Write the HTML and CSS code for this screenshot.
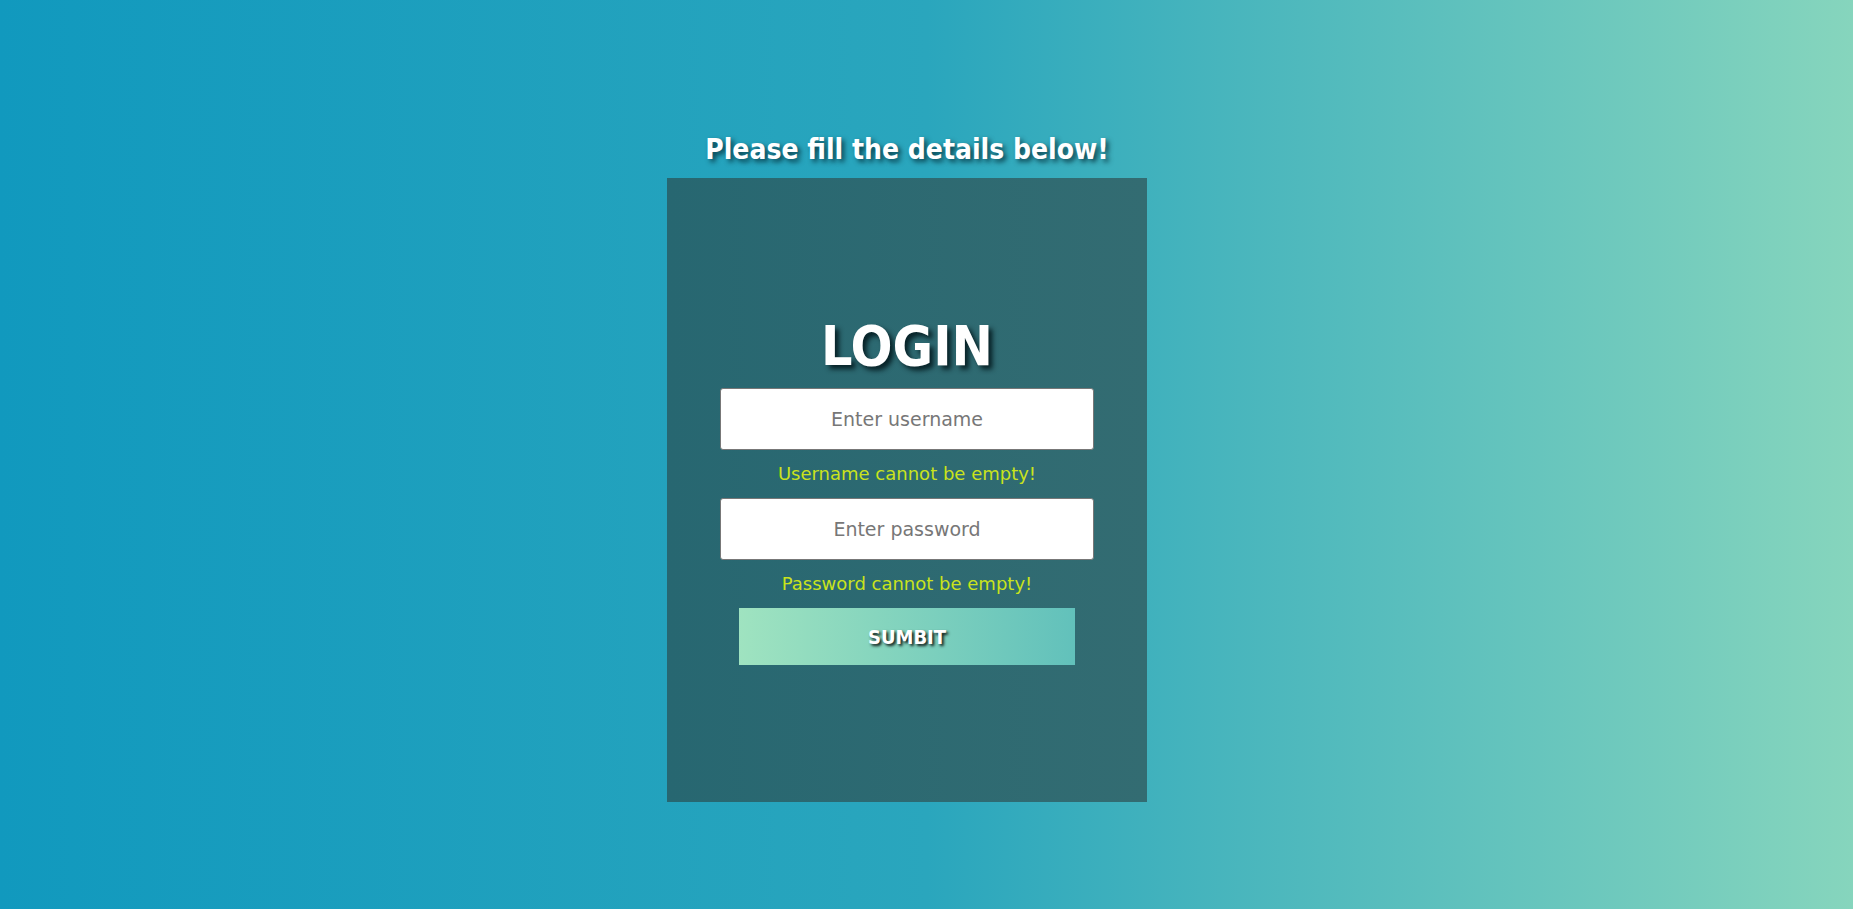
FILE: index.html
```html
<!DOCTYPE html>
<html lang="en">
<head>
<meta charset="utf-8">
<title>Login</title>
<link rel="stylesheet" href="styles.css">
</head>
<body>
<div class="page">
  <div class="wrap">
    <h2 class="title">Please fill the details below!</h2>
    <form class="card">
      <h1 class="login">LOGIN</h1>
      <input class="field" type="text" placeholder="Enter username">
      <p class="err">Username cannot be empty!</p>
      <input class="field" type="password" placeholder="Enter password">
      <p class="err">Password cannot be empty!</p>
      <button class="btn" type="button">SUMBIT</button>
    </form>
  </div>
</div>
</body>
</html>
```
FILE: styles.css
```css
html, body {
  margin: 0;
  padding: 0;
  height: 100%;
}
body {
  font-family: "DejaVu Sans", sans-serif;
  background: linear-gradient(to right, #1199be 0%, #2aa6bd 50%, #86d5bd 100%);
  overflow: hidden;
}
.page {
  height: 909px;
  display: flex;
  justify-content: center;
  padding-right: 39px;
  box-sizing: border-box;
}
.wrap {
  display: flex;
  flex-direction: column;
  align-items: center;
  padding-top: 133px;
}
.title {
  margin: 0 0 11px;
  font-family: "DejaVu Sans Condensed", "DejaVu Sans", sans-serif;
  font-size: 28px;
  line-height: 34px;
  font-weight: bold;
  color: #fff;
  text-shadow: 3px 3px 5px rgba(0, 40, 50, 0.8);
}
.card {
  width: 480px;
  height: 624px;
  box-sizing: border-box;
  padding-top: 136px;
  background: linear-gradient(to right, #276771, #336c72);
  display: flex;
  flex-direction: column;
  align-items: center;
}
.login {
  margin: 0 0 10px;
  font-family: "DejaVu Sans Condensed", "DejaVu Sans", sans-serif;
  font-size: 55px;
  line-height: 64px;
  font-weight: bold;
  color: #fff;
  text-shadow: 4px 4px 5px rgba(0, 20, 25, 0.85);
}
.field {
  width: 374px;
  height: 62px;
  box-sizing: border-box;
  border: 1px solid #777;
  border-radius: 3px;
  background: #fff;
  font-family: "DejaVu Sans", sans-serif;
  font-size: 19px;
  text-align: center;
  color: #333;
  outline: none;
  padding: 0 10px;
}
.field::placeholder {
  color: #777;
}
.err {
  margin: 12px 0;
  font-size: 18px;
  line-height: 24px;
  color: #c9e31c;
}
.btn {
  width: 336px;
  height: 57px;
  border: none;
  background: linear-gradient(to right, #9fe3c0, #62c1bb);
  font-family: "DejaVu Sans Condensed", "DejaVu Sans", sans-serif;
  font-size: 20px;
  font-weight: bold;
  color: #fff;
  text-shadow: 2px 2px 3px rgba(0, 0, 0, 0.9);
  cursor: pointer;
}
```
